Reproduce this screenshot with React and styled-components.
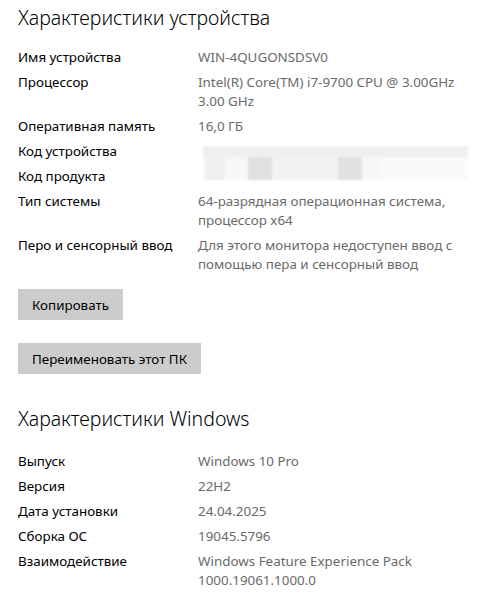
import React from "react";
import styled, { createGlobalStyle } from "styled-components";

const Global = createGlobalStyle`
  html, body { margin: 0; padding: 0; background: #ffffff; }
  body { font-family: "Noto Sans", "Open Sans", "Liberation Sans", sans-serif; }
`;

const Page = styled.div`
  width: 497px;
  height: 598px;
  box-sizing: border-box;
  padding: 4px 18px 0 18px;
  overflow: hidden;
  display: flex;
  flex-direction: column;
`;

const Heading = styled.h2`
  margin: ${(p) => p.$top || 0}px 0 0 0;
  font-size: 19.5px;
  font-weight: 300;
  line-height: 28px;
  color: #000000;
  white-space: nowrap;
`;

const Grid = styled.div`
  display: grid;
  grid-template-columns: 180px 1fr;
  row-gap: 6px;
  margin-top: ${(p) => p.$top}px;
  font-size: 13.4px;
  line-height: 19px;
`;

const Label = styled.div`
  grid-column: 1;
  color: #000000;
  white-space: nowrap;
`;

const Value = styled.div`
  grid-column: 2;
  color: #6a6a6a;
  white-space: nowrap;
`;

const Redacted = styled.div`
  grid-column: 2;
  grid-row: span 2;
  margin: 4px 0 0 5px;
  width: 265px;
  height: 34px;
  display: flex;
  flex-direction: column;
  filter: blur(1.2px);
`;

const RedBand = styled.div`
  height: 11px;
  background: #efefef;
`;

const RedBlocks = styled.div`
  flex: 1;
  display: flex;
  background: #fafafa;
`;

const Block = styled.div`
  width: ${(p) => p.$w}px;
  background: ${(p) => p.$c};
`;

const Button = styled.button`
  align-self: flex-start;
  margin-top: ${(p) => p.$top}px;
  height: 31px;
  padding: 0 14px;
  border: none;
  background: #cccccc;
  color: #000000;
  font-family: inherit;
  font-size: 13.4px;
  cursor: pointer;
`;

const deviceRows = [
  ["Имя устройства", ["WIN-4QUGONSDSV0"]],
  ["Процессор", ["Intel(R) Core(TM) i7-9700 CPU @ 3.00GHz", "3.00 GHz"]],
  ["Оперативная память", ["16,0 ГБ"]],
];

const deviceRows2 = [
  ["Тип системы", ["64-разрядная операционная система,", "процессор x64"]],
  ["Перо и сенсорный ввод", ["Для этого монитора недоступен ввод с", "помощью пера и сенсорный ввод"]],
];

const winRows = [
  ["Выпуск", ["Windows 10 Pro"]],
  ["Версия", ["22H2"]],
  ["Дата установки", ["24.04.2025"]],
  ["Сборка ОС", ["19045.5796"]],
  ["Взаимодействие", ["Windows Feature Experience Pack", "1000.19061.1000.0"]],
];

function Lines({ lines }) {
  return lines.map((l, i) => (
    <React.Fragment key={i}>
      {i > 0 && <br />}
      {l}
    </React.Fragment>
  ));
}

function Rows({ rows }) {
  return rows.map(([k, v]) => (
    <React.Fragment key={k}>
      <Label>{k}</Label>
      <Value>
        <Lines lines={v} />
      </Value>
    </React.Fragment>
  ));
}

export default function App() {
  return (
    <>
      <Global />
      <Page>
        <Heading>Характеристики устройства</Heading>
        <Grid $top={16}>
          <Rows rows={deviceRows} />
          <Label style={{ gridRow: 4 }}>Код устройства</Label>
          <Redacted style={{ gridRow: "4 / span 2" }}>
            <RedBand />
            <RedBlocks>
              <Block $w={2} $c="#fafafa" />
              <Block $w={20} $c="#efefef" />
              <Block $w={23} $c="#f7f7f7" />
              <Block $w={24} $c="#e0e0e0" />
              <Block $w={66} $c="#f2f2f2" />
              <Block $w={24} $c="#e1e1e1" />
              <Block $w={20} $c="#f7f7f7" />
            </RedBlocks>
          </Redacted>
          <Label style={{ gridRow: 5 }}>Код продукта</Label>
          <Rows rows={deviceRows2} />
        </Grid>
        <Button $top={15}>Копировать</Button>
        <Button $top={23}>Переименовать этот ПК</Button>
        <Heading $top={31}>Характеристики Windows</Heading>
        <Grid $top={19}>
          <Rows rows={winRows} />
        </Grid>
      </Page>
    </>
  );
}
